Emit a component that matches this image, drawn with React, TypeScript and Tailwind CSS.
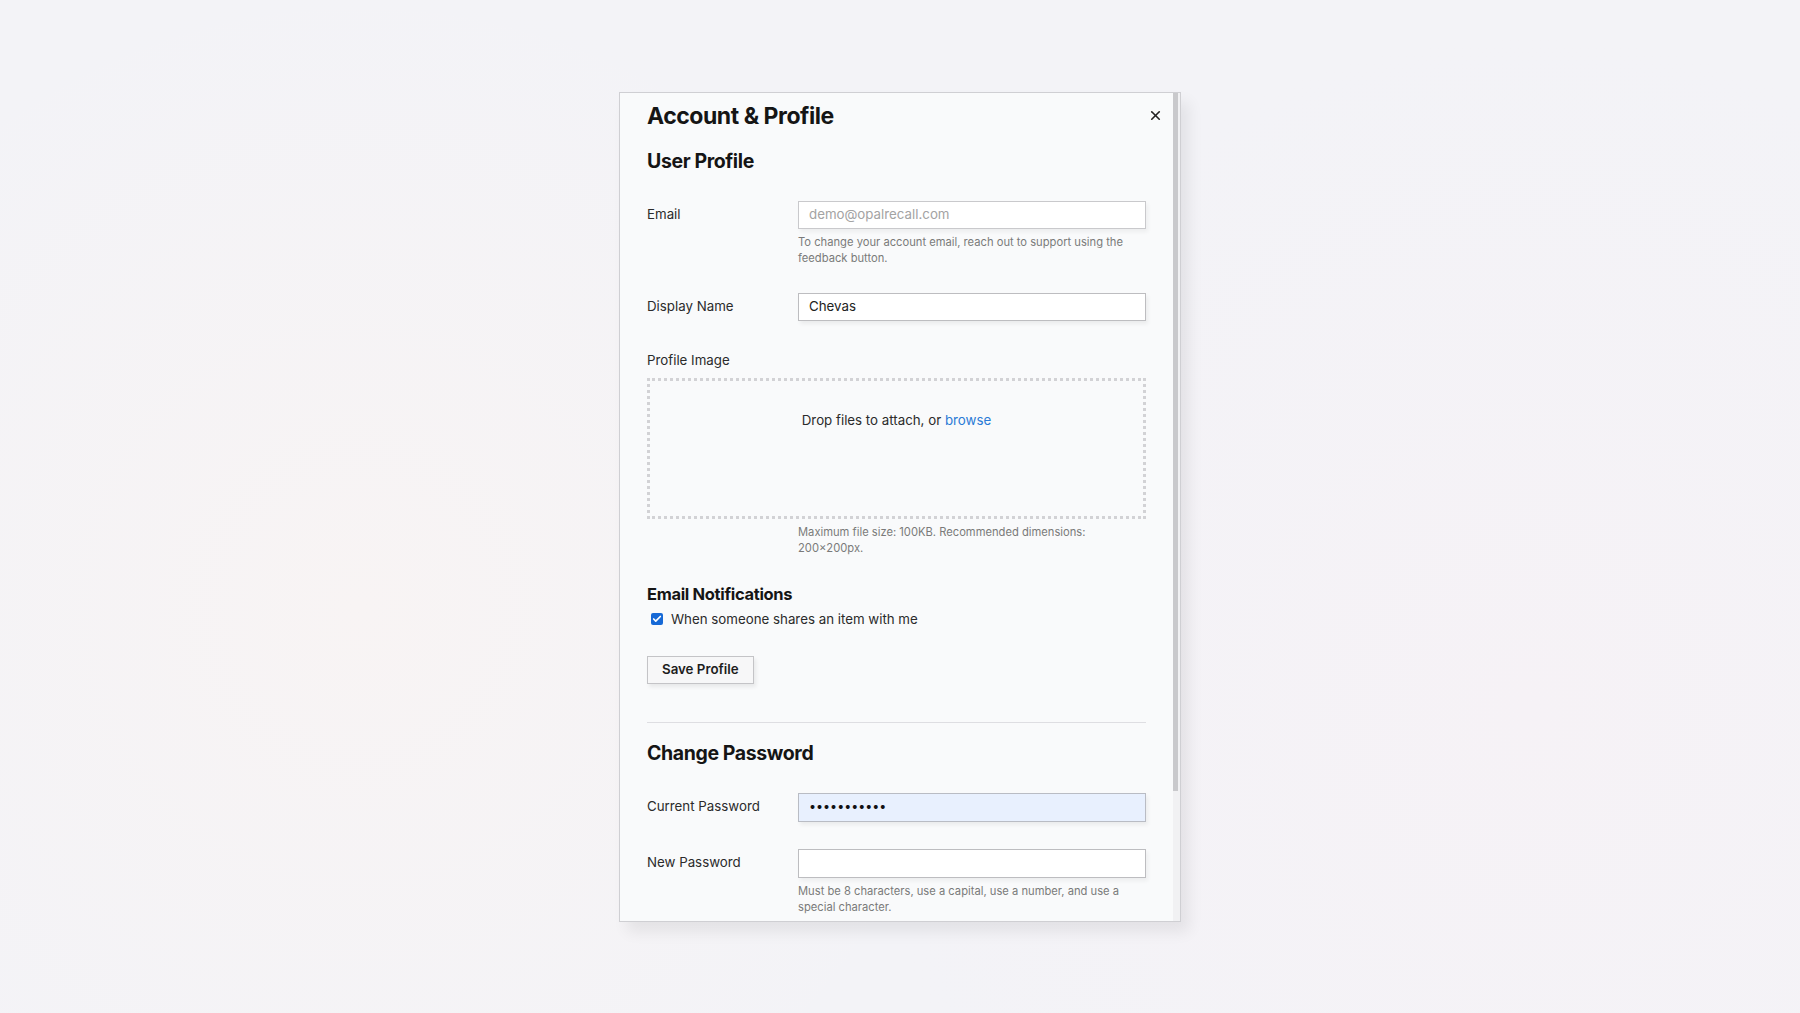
import { X, Check } from 'lucide-react';

function Field({ label, children }: { label: string; children: React.ReactNode }) {
  return (
    <div className="grid grid-cols-[151px_348px] items-start">
      <div className="flex h-[28px] items-center text-[13.3px] text-[#2b2b2b]">{label}</div>
      <div>{children}</div>
    </div>
  );
}

function Help({ children }: { children: React.ReactNode }) {
  return <p className="mt-[5px] pr-5 text-[11.2px] leading-[16px] text-[#7a7a7a]">{children}</p>;
}

export default function App() {
  return (
    <div
      className="flex h-screen w-full items-center justify-center bg-[#f3f3f7] bg-[radial-gradient(circle_at_20%_60%,#f8f4f4_0%,transparent_40%),radial-gradient(circle_at_85%_70%,#f6f2f6_0%,transparent_40%)]"
      style={{ fontFamily: 'Inter, "Noto Sans", sans-serif' }}
    >
      <div className="flex h-[830px] w-[562px] overflow-hidden border border-[#cfcfd3] bg-[#f9fafb] shadow-[8px_10px_14px_rgba(0,0,0,0.07)]">
        {/* content */}
        <div className="flex-1 pl-[27px] pt-[10px]">
          <div className="flex h-[26px] items-center justify-between pr-[10px]">
            <h2 className="text-[23px] font-bold leading-[26px] tracking-[-0.02em] text-[#151515]">Account &amp; Profile</h2>
            <X className="h-[15px] w-[15px] text-[#222]" strokeWidth={2.6} />
          </div>

          <h3 className="mt-[20px] text-[19.5px] font-bold leading-[24px] tracking-[-0.02em] text-[#151515]">User Profile</h3>

          <div className="mt-[28px]">
            <Field label="Email">
              <div className="flex h-[28px] items-center border border-[#c9c9cc] bg-white px-[10px] text-[13.3px] text-[#a3a3a3] shadow-[2px_3px_4px_rgba(0,0,0,0.05)]">
                demo@opalrecall.com
              </div>
              <Help>To change your account email, reach out to support using the feedback button.</Help>
            </Field>
          </div>

          <div className="mt-[27px]">
            <Field label="Display Name">
              <div className="flex h-[28px] items-center border border-[#bdbdc0] bg-white px-[10px] text-[13.3px] text-[#222] shadow-[2px_3px_4px_rgba(0,0,0,0.06)]">
                Chevas
              </div>
            </Field>
          </div>

          <div className="mt-[30px] text-[13.3px] leading-[18px] text-[#2b2b2b]">Profile Image</div>
          <div className="mt-[9px] h-[141px] w-[499px] border-[3px] border-dotted border-[#d2d2d5] pt-[30px] text-center text-[13.3px] leading-[18px] text-[#2b2b2b]">
            Drop files to attach, or <span className="text-[#2b7bd6]">browse</span>
          </div>
          <div className="ml-[151px] w-[348px]">
            <p className="mt-[5px] pr-5 text-[11.2px] leading-[16px] text-[#7a7a7a]">
              Maximum file size: 100KB. Recommended dimensions: 200×200px.
            </p>
          </div>

          <h4 className="mt-[28px] text-[16.5px] font-bold leading-[20px] tracking-[-0.02em] text-[#151515]">Email Notifications</h4>
          <label className="mt-[6px] flex items-center gap-[8px] pl-[4px] text-[13.3px] leading-[18px] text-[#2b2b2b]">
            <span className="flex h-[12px] w-[12px] items-center justify-center rounded-[2px] bg-[#1769d6]">
              <Check className="h-[10px] w-[10px] text-white" strokeWidth={4} />
            </span>
            When someone shares an item with me
          </label>

          <button className="mt-[28px] flex h-[28px] items-center border border-[#c4c4c7] bg-[#f7f7f8] px-[14px] text-[13.3px] font-semibold text-[#1d1d1d] shadow-[2px_3px_4px_rgba(0,0,0,0.07)]">
            Save Profile
          </button>

          <div className="mt-[38px] h-px w-[499px] bg-[#dedee2]" />

          <h3 className="mt-[18px] text-[19.5px] font-bold leading-[24px] tracking-[-0.02em] text-[#151515]">Change Password</h3>

          <div className="mt-[28px]">
            <Field label="Current Password">
              <div className="flex h-[29px] items-center border border-[#b9bcc4] bg-[#e8f0fe] px-[10px] text-[12.5px] text-[#111] shadow-[2px_3px_4px_rgba(0,0,0,0.06)]">
                •••••••••••
              </div>
            </Field>
          </div>

          <div className="mt-[27px]">
            <Field label="New Password">
              <div className="h-[29px] border border-[#bdbdc0] bg-white shadow-[2px_3px_4px_rgba(0,0,0,0.05)]" />
              <Help>Must be 8 characters, use a capital, use a number, and use a special character.</Help>
            </Field>
          </div>
        </div>

        {/* scrollbar */}
        <div className="w-[7px] bg-[#f1f1f3]">
          <div className="h-[698px] w-[5px] bg-[#c9c9cc]" />
        </div>
      </div>
    </div>
  );
}
